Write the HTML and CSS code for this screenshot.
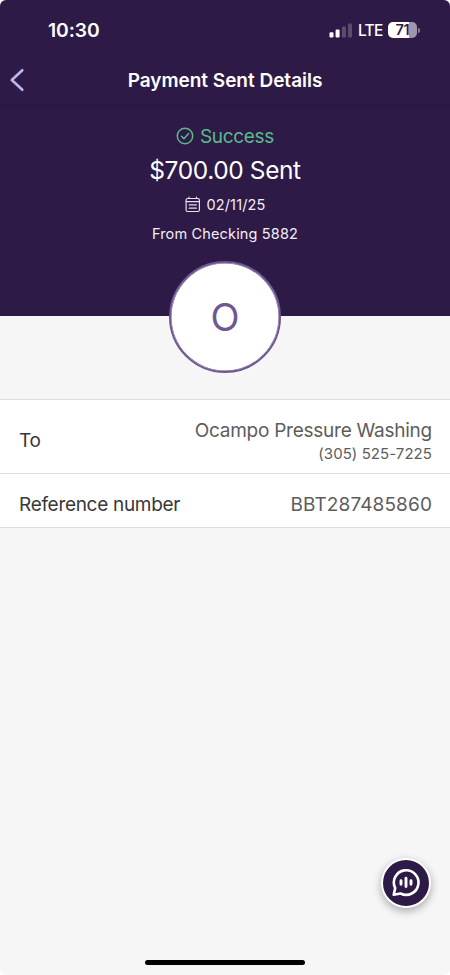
FILE: index.html
```html
<!DOCTYPE html>
<html lang="en">
<head>
<meta charset="utf-8">
<title>Payment Sent Details</title>
<link rel="stylesheet" href="styles.css">
</head>
<body>
<div class="phone">
  <header class="top">
    <div class="status">
      <span class="time">10:30</span>
      <div class="indicators">
        <svg class="signal" width="24" height="16" viewBox="0 0 24 16" fill="#fff">
          <rect x="0.5" y="9.3" width="4" height="5.2" rx="1.2"/>
          <rect x="6.6" y="6.6" width="4" height="7.9" rx="1.2"/>
          <rect x="12.9" y="3.6" width="4" height="10.9" rx="1.2" opacity=".22"/>
          <rect x="19" y="0.5" width="4" height="14" rx="1.2" opacity=".22"/>
        </svg>
        <span class="network">LTE</span>
        <div class="battery"><span class="level">71</span></div>
        <i class="nub"></i>
      </div>
    </div>
    <nav class="nav">
      <svg class="back" width="16" height="24" viewBox="0 0 16 24" fill="none" stroke="#bdb4ee" stroke-width="2.7" stroke-linecap="round" stroke-linejoin="round"><path d="M13.3 2.3 2.8 12 13.3 21.7"/></svg>
      <h1 class="title">Payment Sent Details</h1>
    </nav>
    <section class="summary">
      <div class="success">
        <svg width="18" height="18" viewBox="0 0 18 18" fill="none" stroke="#5bb98b" stroke-width="1.5" stroke-linecap="round" stroke-linejoin="round"><circle cx="9" cy="9" r="7.7"/><path d="m5.5 9.3 2.4 2.5 4.7-5.2"/></svg>
        <span class="success-text">Success</span>
      </div>
      <div class="amount"><span>$700.00 Sent</span></div>
      <div class="date">
        <svg width="16" height="17" viewBox="0 0 16 17" fill="none" stroke="#e6dfec" stroke-width="1.2" stroke-linecap="round"><rect x="1.1" y="2.5" width="13.3" height="13" rx="1.5"/><path d="M1.2 5.6h13M4 1v1.5M11.5 1v1.5M4.2 8.9h7.2M4.2 12.2h7.2"/></svg>
        <span class="date-text">02/11/25</span>
      </div>
      <div class="account"><span>From Checking 5882</span></div>
    </section>
    <div class="avatar"><span>O</span></div>
  </header>
  <main class="details">
    <div class="row to">
      <span class="label">To</span>
      <div class="value">
        <span class="name">Ocampo Pressure Washing</span>
        <span class="number">(305) 525-7225</span>
      </div>
    </div>
    <div class="row reference">
      <span class="label">Reference number</span>
      <span class="code">BBT287485860</span>
    </div>
  </main>
  <button class="chat" aria-label="Chat">
    <svg width="30" height="30" viewBox="0 0 30 30" fill="none" stroke="#fff" stroke-linecap="round" stroke-linejoin="round"><path stroke-width="2.6" d="M2.7 26.8 4.2 20.1A12.3 12.3 0 1 1 9.6 25.5Z"/><path stroke-width="2.9" d="M10 12.6v3.6M15 10.3v8.2M20 12.6v3.6"/></svg>
  </button>
  <div class="home"></div>
</div>
</body>
</html>
```
FILE: styles.css
```css
* { box-sizing: border-box; }
body { margin: 0; background: #fff; font-family: Inter, "Liberation Sans", sans-serif; }
.phone { position: relative; width: 450px; height: 975px; overflow: hidden; border-radius: 6px; background: #f6f6f6; }
.top { position: relative; height: 316px; background: #2e1a47; color: #fff; }
.status { height: 54px; padding: 19px 30px 0 48px; display: flex; justify-content: space-between; }
.time { font-size: 19.3px; line-height: 22px; font-weight: 600; letter-spacing: -.1px; }
.indicators { display: flex; height: 22px; align-items: center; }
.signal { display: block; margin-top: 2px; }
.network { width: 24px; margin-left: 5px; font-size: 15.5px; line-height: 20px; margin-top: 1px; font-weight: 500; letter-spacing: -.7px; }
.battery { width: 29px; height: 16px; margin-left: 6px; border-radius: 5px; background: linear-gradient(90deg, #fff 21px, #a096ad 21px); color: #2e1a47; text-align: center; }
.level { display: block; font-size: 14.5px; line-height: 16px; font-weight: 600; letter-spacing: -.2px; }
.nub { width: 2px; height: 5px; margin-left: 1px; border-radius: 0 2px 2px 0; background: #8c8099; }
.nav { height: 52px; display: flex; align-items: center; padding-left: 9px; border-bottom: 1px solid #291640; }
.back { flex: none; }
.title { flex: 1; margin: 2px 25px 0 0; text-align: center; font-size: 19px; line-height: 24px; font-weight: 600; letter-spacing: -.02px; }
.summary { display: flex; flex-direction: column; align-items: center; padding-top: 17px; }
.success { display: flex; align-items: center; gap: 6px; height: 26px; color: #5bb98b; }
.success-text { font-size: 19px; letter-spacing: -.3px; }
.amount { height: 41px; font-size: 24.5px; line-height: 42px; letter-spacing: -.4px; }
.date { display: flex; align-items: center; gap: 5px; height: 28px; padding-left: 1px; }
.date-text, .account { font-size: 14.5px; color: #f2eef6; letter-spacing: .15px; }
.account { height: 29px; line-height: 31px; }
.avatar { position: absolute; left: 169px; top: 261px; width: 112px; height: 112px; border: 2px solid #6f5791; box-shadow: inset 0 0 0 .5px #6f5791; border-radius: 50%; background: #fff; color: #6f5791; display: flex; align-items: center; justify-content: center; font-size: 38px; }
.details { margin-top: 83px; background: #fff; border-top: 1px solid #dedede; border-bottom: 1px solid #dedede; }
.row { display: flex; justify-content: space-between; align-items: center; padding: 0 18px 0 19px; color: #5d5d5d; }
.to { height: 74px; border-bottom: 1px solid #dedede; padding-top: 8px; }
.reference { height: 53px; padding-top: 8px; font-size: 19px; }
.label { color: #383838; font-size: 19px; letter-spacing: -.3px; }
.value { display: flex; flex-direction: column; align-items: flex-end; }
.name { font-size: 19px; line-height: 26px; letter-spacing: -.25px; }
.number { font-size: 15px; line-height: 19px; letter-spacing: .06px; }
.code { letter-spacing: .12px; }
.chat { position: absolute; left: 381px; top: 858px; width: 50px; height: 50px; padding: 0; border: 2px solid #fff; border-radius: 50%; background: #2e1a47; display: flex; align-items: center; justify-content: center; box-shadow: 0 3px 8px rgba(0,0,0,.32); }
.home { position: absolute; left: 145px; top: 960px; width: 160px; height: 5px; border-radius: 3px; background: #000; }
```
